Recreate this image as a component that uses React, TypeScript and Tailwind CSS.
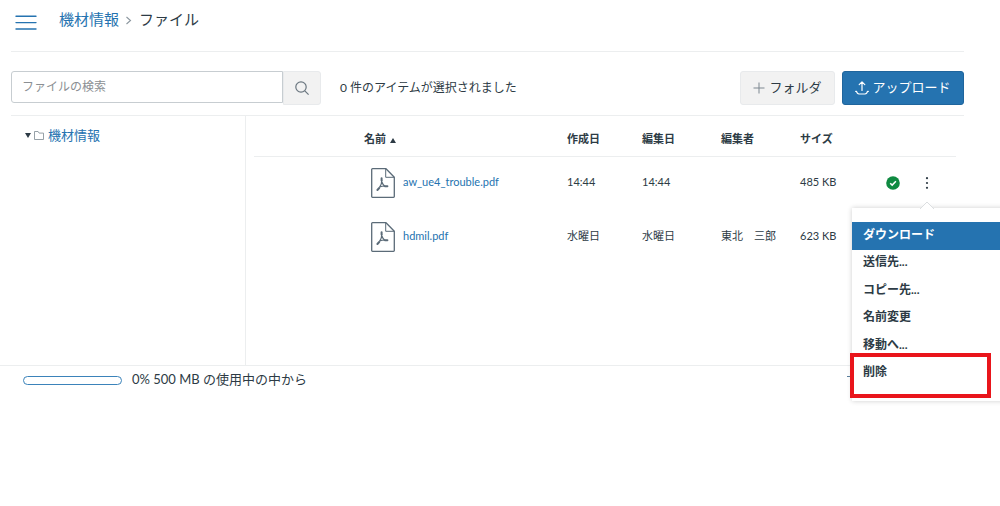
import { useState } from 'react';

interface FileRow {
  name: string;
  created: string;
  edited: string;
  editor: string;
  size: string;
  published: boolean;
}

const FILES: FileRow[] = [
  { name: 'aw_ue4_trouble.pdf', created: '14:44', edited: '14:44', editor: '', size: '485 KB', published: true },
  { name: 'hdmil.pdf', created: '水曜日', edited: '水曜日', editor: '東北　三郎', size: '623 KB', published: false },
];

const ACTIONS = ['ダウンロード', '送信先...', 'コピー先...', '名前変更', '移動へ...', '削除'];

function PdfIcon() {
  return (
    <svg width="24" height="30" viewBox="0 0 24 30" fill="none" stroke="#5b6b78" strokeWidth="1.3" strokeLinejoin="round" aria-hidden="true">
      <path d="M1.5.7H15l8.3 8.6v19.2a.8.8 0 0 1-.8.8h-21a.8.8 0 0 1-.8-.8v-27a.8.8 0 0 1 .8-.8Z" />
      <path d="M14.7.8v8.5h8.5" strokeWidth="1" />
      <path d="M10.8 12.2c.1 2.6-.8 5-2.3 7.2M10.9 14c.6 1.9 1.6 3.4 3 4.2M8.8 19c1.7-.8 3.6-1.1 5.4-1" strokeWidth="1.2" />
      <path d="M10.6 10.2v2.4M8.2 20 6.4 22M14 18.2h2.4" strokeWidth="2" strokeLinecap="round" />
    </svg>
  );
}

function UploadIcon() {
  return (
    <svg width="14" height="14" viewBox="0 0 14 14" fill="none" stroke="currentColor" strokeWidth="1.2" strokeLinecap="round" strokeLinejoin="round" aria-hidden="true">
      <path d="M7 9.5V1M4.2 3.7 7 .9l2.8 2.8" />
      <path d="M.7 10.4h.8c.4 1.6 1.2 2.6 2.5 2.6h6c1.3 0 2.1-1 2.5-2.6h.8" />
    </svg>
  );
}

function PublishedIcon() {
  return (
    <svg width="14" height="14" viewBox="0 0 14 14" aria-hidden="true">
      <circle cx="7" cy="7" r="6.8" fill="#0f8a41" />
      <path d="m4.2 7.2 2 1.9 3.7-3.8" fill="none" stroke="#fff" strokeWidth="1.5" />
    </svg>
  );
}

function ActionMenu() {
  return (
    <div className="absolute top-8 -left-[68px] z-10 h-[193px] w-[180px] bg-white pt-[14px] shadow-[0_0_5px_rgba(0,0,0,0.2)]">
      <svg className="absolute -top-[7px] left-[68px]" width="14" height="8" viewBox="0 0 14 8" aria-hidden="true">
        <path d="M0 8 7 1l7 7" fill="#fff" stroke="#dcdfe1" strokeWidth="1" />
        <path d="M1 7.5h12" stroke="#fff" strokeWidth="1" />
      </svg>
      <ul role="menu" className="flex h-[165px] flex-col">
        {ACTIONS.map((label, i) => (
          <li key={label} role="none" className="relative flex-1">
            <button
              type="button"
              role="menuitem"
              className={[
                'flex h-full w-full items-center pl-[11px] pb-[3px] text-left text-xs font-bold whitespace-nowrap',
                i === 0 ? 'bg-[#2573b0] text-white' : 'text-[#2d3b45]',
              ].join(' ')}
            >
              {label}
            </button>
            {label === '削除' && (
              <span className="pointer-events-none absolute -top-[7px] -left-[2px] h-[45px] w-[141px] border-4 border-[#e9151b]" />
            )}
          </li>
        ))}
      </ul>
    </div>
  );
}

function FileTable({ openMenu, onToggle }: { openMenu: string | null; onToggle: (name: string) => void }) {
  return (
    <table className="w-full table-fixed text-left text-[11px] text-[#2d3b45]">
      <colgroup>
        <col className="w-[110px]" />
        <col />
        <col className="w-[75px]" />
        <col className="w-[79px]" />
        <col className="w-[79px]" />
        <col className="w-[76px]" />
        <col className="w-[34px]" />
        <col className="w-[46px]" />
      </colgroup>
      <thead>
        <tr className="h-10 border-b border-[#eceeef]">
          <td />
          <th scope="col" className="pt-[6px]">
            <button type="button" className="flex items-center gap-1 font-bold">
              名前
              <svg width="6" height="5" viewBox="0 0 6 5" className="mt-1" aria-hidden="true">
                <path d="m3 0 3 5H0z" fill="#2d3b45" />
              </svg>
            </button>
          </th>
          <th scope="col" className="pt-[6px]">作成日</th>
          <th scope="col" className="pt-[6px]">編集日</th>
          <th scope="col" className="pt-[6px]">編集者</th>
          <th scope="col" className="pt-[6px]">サイズ</th>
          <td />
          <td />
        </tr>
      </thead>
      <tbody>
        {FILES.map((f) => (
          <tr key={f.name} className="h-[54px]">
            <td />
            <td>
              <a href="#file" className="flex items-center gap-2 pl-[7px] text-[#2573b0]">
                <PdfIcon />
                <span className="pb-[2px]">{f.name}</span>
              </a>
            </td>
            <td className="pb-[2px]">{f.created}</td>
            <td className="pb-[2px]">{f.edited}</td>
            <td className="pb-[2px] whitespace-nowrap">{f.editor}</td>
            <td className="pb-[2px]">{f.size}</td>
            <td>
              {f.published && (
                <button type="button" aria-label="公開済み" className="mx-auto block">
                  <PublishedIcon />
                </button>
              )}
            </td>
            <td className="pr-3">
              {f.published && (
                <div className="relative mx-auto w-[14px]">
                  <button
                    type="button"
                    aria-label="操作"
                    aria-expanded={openMenu === f.name}
                    onClick={() => onToggle(f.name)}
                    className="flex h-[14px] w-[14px] items-center justify-center"
                  >
                    <svg width="4" height="12" viewBox="0 0 4 12" fill="#2d3b45" aria-hidden="true">
                      <circle cx="2" cy="1.2" r="1.1" />
                      <circle cx="2" cy="6" r="1.1" />
                      <circle cx="2" cy="10.8" r="1.1" />
                    </svg>
                  </button>
                  {openMenu === f.name && <ActionMenu />}
                </div>
              )}
            </td>
          </tr>
        ))}
      </tbody>
    </table>
  );
}

export default function App() {
  const [query, setQuery] = useState('');
  const [openMenu, setOpenMenu] = useState<string | null>('aw_ue4_trouble.pdf');

  return (
    <div className="min-h-screen overflow-x-hidden bg-white font-['Lato','Noto_Sans_CJK_JP',sans-serif] text-[#2d3b45] lining-nums">
      <div className="pr-9">
        <header className="ml-[11px] flex h-[52px] items-start border-b border-[#eceeef]">
          <button type="button" aria-label="メニュー" className="mt-[15px] ml-1 text-[#2573b0]">
            <svg width="22" height="15" viewBox="0 0 22 15" fill="none" stroke="currentColor" strokeWidth="1.4" strokeLinecap="round" aria-hidden="true">
              <path d="M1 1.2h20M1 7.6h20M1 14h20" />
            </svg>
          </button>
          <nav className="mt-[7px] ml-[22px] flex items-center text-[15px] leading-6">
            <a href="#course" className="text-[#2573b0]">機材情報</a>
            <svg width="20" height="9" viewBox="0 0 20 9" fill="none" stroke="#8b969e" strokeWidth="1.1" className="mt-[3px]" aria-hidden="true">
              <path d="m7.5 1 4 3.5-4 3.5" />
            </svg>
            <span>ファイル</span>
          </nav>
        </header>

        <div className="ml-[11px] flex items-center border-b border-[#eceeef] pt-[19px] pb-[10px]">
          <form className="flex items-start" onSubmit={(e) => e.preventDefault()}>
            <input
              type="text"
              aria-label="ファイルの検索"
              placeholder="ファイルの検索"
              value={query}
              onChange={(e) => setQuery(e.target.value)}
              className="h-8 w-[272px] rounded-l-[3px] border border-[#c7cdd1] px-[10px] pb-[2px] text-xs outline-none placeholder:text-[#8b8f93]"
            />
            <button
              type="submit"
              aria-label="検索"
              className="flex h-[34px] w-[38px] items-center justify-center rounded-r-[3px] border border-[#e8eaec] bg-[#f2f2f2]"
            >
              <svg width="14" height="14" viewBox="0 0 14 14" fill="none" stroke="#6b7780" strokeWidth="1.2" aria-hidden="true">
                <circle cx="6" cy="6" r="5.2" />
                <path d="m9.8 9.8 3.8 3.8" />
              </svg>
            </button>
          </form>
          <span className="ml-[19px] text-xs">0 件のアイテムが選択されました</span>
          <div className="ml-auto flex gap-[7px] text-[13px]">
            <button type="button" className="flex h-[34px] w-[95px] items-center justify-center gap-1 rounded-[3px] border border-[#e8eaec] bg-[#f2f2f2]">
              <svg width="12" height="12" viewBox="0 0 12 12" stroke="#7d8790" strokeWidth="1" aria-hidden="true">
                <path d="M6 .5v11M.5 6h11" />
              </svg>
              フォルダ
            </button>
            <button type="button" className="flex h-[34px] w-[122px] items-center justify-center gap-[3px] rounded-[3px] border border-[#1f659d] bg-[#2573b0] text-white">
              <UploadIcon />
              アップロード
            </button>
          </div>
        </div>

        <div className="ml-[11px] flex h-[249px]">
          <aside className="w-[235px] shrink-0 border-r border-[#eceeef] pt-[9px] pl-[14px]">
            <a href="#folder" className="flex items-center text-[13px] leading-5 text-[#2573b0]">
              <svg width="6" height="5" viewBox="0 0 6 5" aria-hidden="true">
                <path d="M0 0h6L3 5z" fill="#2d3b45" />
              </svg>
              <svg width="10" height="9" viewBox="0 0 10 9" fill="none" stroke="#8b969e" strokeWidth=".9" className="mt-px mr-1 ml-[3px]" aria-hidden="true">
                <path d="M.5 8.5v-8h3.6l1 1.6h4.4v6.4z" />
              </svg>
              機材情報
            </a>
          </aside>
          <main className="min-w-0 flex-1 pr-2 pl-2">
            <FileTable openMenu={openMenu} onToggle={(name) => setOpenMenu(openMenu === name ? null : name)} />
          </main>
        </div>

        <footer className="flex items-start border-t border-[#eceeef] pl-[23px]">
          <div role="progressbar" aria-label="使用量" aria-valuenow={0} className="mt-[10px] h-[9px] w-[99px] rounded-full border border-[#3b83ba]" />
          <span className="mt-[3px] ml-[10px] text-[13px] leading-5">0% 500 MB の使用中の中から</span>
          <span className="mt-[10px] mr-[112px] ml-auto h-px w-[5px] bg-[#5b7f9e]" />
        </footer>
      </div>
    </div>
  );
}
